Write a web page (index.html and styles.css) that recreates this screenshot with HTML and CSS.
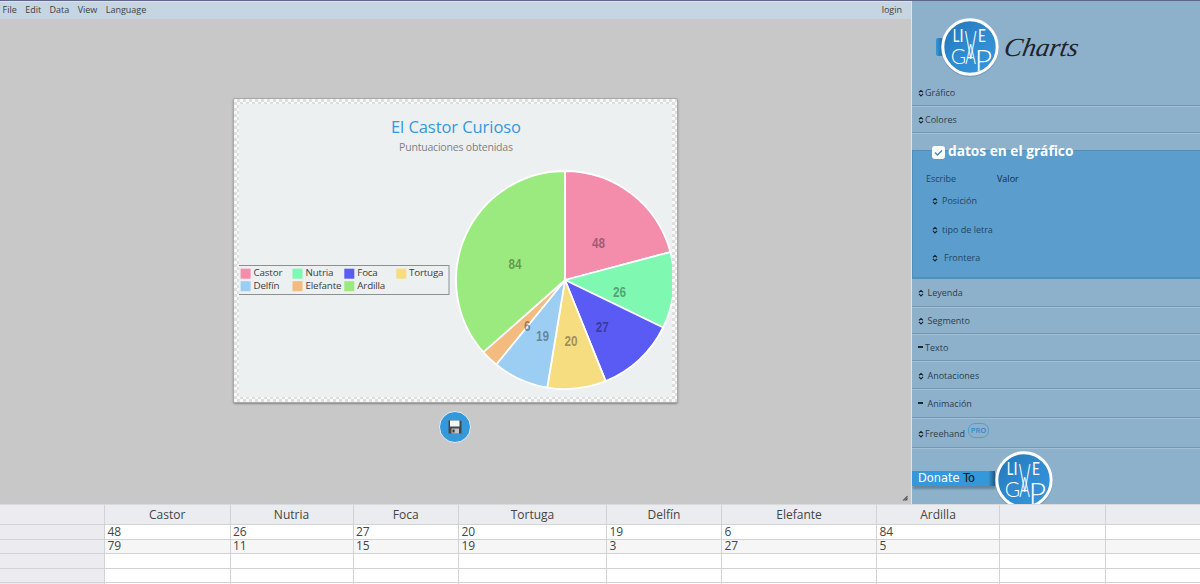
FILE: index.html
```html
<!DOCTYPE html>
<html lang="es">

<head>
    <meta charset="UTF-8">
    <meta name="viewport" content="width=device-width, initial-scale=1.0">
    <title>LiveGap Charts</title>
    <link rel="stylesheet" href="styles.css">
</head>

<body>
    <!-- shared symbols -->
    <svg class="defs" width="0" height="0">
        <symbol id="sort" viewBox="0 0 6 8">
            <path d="M0.900 3.400 L3 1.400 L5.100 3.400 M0.900 4.900 L3 6.900 L5.100 4.900" fill="none" stroke="#18222b" stroke-width="1.1" />
        </symbol>
        <symbol id="badge" viewBox="0 0 60 60">
            <circle cx="30" cy="31" r="29" fill="#5f7f98" opacity=".45" />
            <circle cx="30" cy="30" r="27.2" fill="url(#blue)" stroke="#fff" stroke-width="3" />
            <g fill="#fff" font-family="Lato" text-anchor="middle">
                <text transform="translate(16 25) scale(.75 1)" font-size="17">L</text>
                <text transform="translate(21.5 25) scale(.85 1)" font-size="17">I</text>
                <text transform="translate(30.5 42) scale(.46 1)" font-size="39" font-weight="300">V</text>
                <text transform="translate(42 25) scale(.8 1)" font-size="17">E</text>
                <text transform="translate(18.5 46.5)" font-size="21" font-weight="300">G</text>
                <text transform="translate(30.500 47) scale(.6 1)" font-size="27" font-weight="300">A</text>
                <text transform="translate(43.5 54)" font-size="30" font-weight="300">P</text>
            </g>
        </symbol>
        <linearGradient id="blue" x1="0" y1="0" x2="1" y2="1">
            <stop offset="0" stop-color="#2373b4" />
            <stop offset=".5" stop-color="#2f8bd0" />
            <stop offset="1" stop-color="#3a96dc" />
        </linearGradient>
    </svg>

    <div class="top">
        <div class="workspace">
            <nav class="menu">
                <span>File</span>
                <span>Edit</span>
                <span>Data</span>
                <span>View</span>
                <span>Language</span>
                <span class="login">login</span>
            </nav>
            <div class="chart-area">
                <div class="chart-frame">
                    <svg class="chart" width="433" height="293" viewBox="0 0 433 293">
                        <text x="217" y="29" class="title" textLength="130">El Castor Curioso</text>
                        <text x="217" y="47" class="subtitle" textLength="114">Puntuaciones obtenidas</text>

                        <g stroke="#fff" stroke-width="1.800" stroke-linejoin="round">
                            <path fill="#f48cab" d="M326 176 V67 A109 109 0 0 1 431.35 148.03 Z" />
                            <path fill="#7ff8b2" d="M326 176 L431.35 148.03 A109 109 0 0 1 424.11 223.49 Z" />
                            <path fill="#5a5af4" d="M326 176 L424.11 223.49 A109 109 0 0 1 366.67 277.13 Z" />
                            <path fill="#f5dd80" d="M326 176 L366.67 277.13 A109 109 0 0 1 308.22 283.54 Z" />
                            <path fill="#9bcef2" d="M326 176 L308.22 283.54 A109 109 0 0 1 257.21 260.55 Z" />
                            <path fill="#f3bb7f" d="M326 176 L257.21 260.55 A109 109 0 0 1 244.34 248.19 Z" />
                            <path fill="#9aea7f" d="M326 176 L244.34 248.19 A109 109 0 0 1 326 67 Z" />
                        </g>
                        <g class="values">
                            <text transform="translate(359.5 144) scale(.84 1)">48</text>
                            <text transform="translate(380.5 192.7) scale(.84 1)">26</text>
                            <text transform="translate(363.3 227.5) scale(.84 1)">27</text>
                            <text transform="translate(332 242) scale(.84 1)">20</text>
                            <text transform="translate(303.5 237) scale(.84 1)">19</text>
                            <text transform="translate(288.3 227) scale(.84 1)">6</text>
                            <text transform="translate(276 165) scale(.84 1)">84</text>
                        </g>

                        <rect x="-2" y="161.5" width="212" height="29" fill="none" stroke="#8c9093" />
                        <g class="legend">
                            <rect x="1.600" y="164.700" width="10" height="10" fill="#f48cab" />
                            <text x="14.5" y="172.300" textLength="29">Castor</text>
                            <rect x="53.500" y="164.700" width="10" height="10" fill="#7ff8b2" />
                            <text x="66.5" y="172.300" textLength="28">Nutria</text>
                            <rect x="105.300" y="164.700" width="10" height="10" fill="#5a5af4" />
                            <text x="118.3" y="172.300" textLength="20.5">Foca</text>
                            <rect x="157.300" y="164.700" width="10" height="10" fill="#f5dd80" />
                            <text x="170" y="172.300" textLength="34.5">Tortuga</text>
                            <rect x="1.600" y="177.200" width="10" height="10" fill="#9bcef2" />
                            <text x="14.5" y="185" textLength="26">Delfín</text>
                            <rect x="53.500" y="177.200" width="10" height="10" fill="#f3bb7f" />
                            <text x="66.5" y="185" textLength="36">Elefante</text>
                            <rect x="105.300" y="177.200" width="10" height="10" fill="#9aea7f" />
                            <text x="118.3" y="185" textLength="28">Ardilla</text>
                        </g>
                    </svg>
                </div>
                <div class="save">
                    <svg width="16" height="16" viewBox="0 0 16 16">
                        <path d="M1.500 1.500 H13.500 L14.500 2.500 V14.500 H1.500 Z" fill="#454648" />
                        <rect x="3" y="1.500" width="9.500" height="6" fill="#f2f6f8" />
                        <rect x="4.500" y="9.500" width="7.500" height="5" fill="#c3c5c7" />
                        <rect x="5.500" y="10.500" width="2" height="3" fill="#333" />
                    </svg>
                </div>
                <svg class="resize" width="6" height="6" viewBox="0 0 6 6">
                    <path d="M0.500 5.500 L5.500 0.500 V5.500 Z" fill="#777" />
                    <path d="M1 5.500 L5.500 1 M3.500 5.500 L5.500 3.500" stroke="#444" stroke-width=".8" />
                </svg>
            </div>
        </div>

        <aside class="sidebar">
            <div class="brand">
                <i class="ribbon"></i>
                <svg class="badge" width="60" height="60"><use href="#badge" /></svg>
                <svg class="charts" width="82" height="40" viewBox="0 0 82 40">
                    <text transform="translate(2 29) skewX(-10)" textLength="74" lengthAdjust="spacingAndGlyphs">Charts</text>
                </svg>
            </div>
            <div class="row grafico"><svg class="sort"><use href="#sort" /></svg>Gráfico</div>
            <div class="row colores"><svg class="sort"><use href="#sort" /></svg>Colores</div>

            <section class="panel">
                <h3><span class="check"><svg width="13" height="13" viewBox="0 0 13 13"><path d="M3 6.500 L5.500 9 L10 4.500" fill="none" stroke="#5086ad" stroke-width="1.500" /></svg></span>datos en el gráfico</h3>
                <div class="pair"><span>Escribe</span><b>Valor</b></div>
                <div class="sub"><svg class="sort"><use href="#sort" /></svg>Posición</div>
                <div class="sub"><svg class="sort"><use href="#sort" /></svg>tipo de letra</div>
                <div class="sub frontera"><svg class="sort"><use href="#sort" /></svg>Frontera</div>
            </section>

            <div class="row wide leyenda"><svg class="sort"><use href="#sort" /></svg>Leyenda</div>
            <div class="row wide segmento"><svg class="sort"><use href="#sort" /></svg>Segmento</div>
            <div class="row texto"><i class="dash"></i>Texto</div>
            <div class="row wide anotaciones"><svg class="sort"><use href="#sort" /></svg>Anotaciones</div>
            <div class="row wide animacion"><i class="dash"></i>Animación</div>
            <div class="row freehand"><svg class="sort"><use href="#sort" /></svg>Freehand<span class="pro">PRO</span></div>

            <div class="donate">
                <div class="donate-label">Donate <b>To</b></div>
                <svg class="badge" width="60" height="60"><use href="#badge" /></svg>
            </div>
        </aside>
    </div>

    <div class="sheet">
        <div class="line head"><span></span><span>Castor</span><span>Nutria</span><span>Foca</span><span>Tortuga</span><span>Delfín</span><span>Elefante</span><span>Ardilla</span><span></span><span></span></div>
        <div class="line"><span></span><span>48</span><span>26</span><span>27</span><span>20</span><span>19</span><span>6</span><span>84</span><span></span><span></span></div>
        <div class="line even"><span></span><span>79</span><span>11</span><span>15</span><span>19</span><span>3</span><span>27</span><span>5</span><span></span><span></span></div>
        <div class="line"><span></span><span></span><span></span><span></span><span></span><span></span><span></span><span></span><span></span><span></span></div>
        <div class="line"><span></span><span></span><span></span><span></span><span></span><span></span><span></span><span></span><span></span><span></span></div>
        <div class="line"><span></span><span></span><span></span><span></span><span></span><span></span><span></span><span></span><span></span><span></span></div>
    </div>
</body>

</html>
```

FILE: styles.css
```css
* {
    box-sizing: border-box;
}

body {
    margin: 0;
    height: 584px;
    overflow: hidden;
    font-family: "Open Sans", "Noto Sans", sans-serif;
    font-size: 9px;
    color: #2c3e4c;
    border-top: 1px solid #62668c;
    background-color: #fff;
}

.defs {
    position: absolute;
}

.top {
    display: flex;
    height: 503px;
}

.workspace {
    width: 911px;
    display: flex;
    flex-direction: column;
    background-color: #c8c8c8;
}

.menu {
    display: flex;
    align-items: center;
    gap: 8.4px;
    height: 18px;
    padding: 0 9px 2px 2.5px;
    background-color: #c5d5e1;
    border-top: 1px solid #d9e3ee;
    color: #3c4146;
}

.login {
    margin-left: auto;
}

.chart-area {
    flex: 1;
    position: relative;
    display: flex;
    flex-direction: column;
    align-items: center;
    padding-top: 79px;
}

.chart-frame {
    width: 445px;
    height: 305px;
    padding: 5px;
    border: 1px solid #aaa;
    border-radius: 2px;
    box-shadow: 0 1px 2px rgba(0, 0, 0, 0.35);
    background: repeating-conic-gradient(#dedede 0 25%, #f8f8f8 0 50%) 0 0 / 6px 6px;
}

.chart {
    display: block;
    overflow: hidden;
    background-color: #ecf0f1;
}

.title {
    font-size: 16.5px;
    fill: #3498db;
    text-anchor: middle;
}

.subtitle {
    font-size: 10.5px;
    fill: #7f8183;
    text-anchor: middle;
}

.values {
    font-family: "Liberation Sans", sans-serif;
    font-size: 14px;
    font-weight: bold;
    fill: #000;
    fill-opacity: 0.37;
    text-anchor: middle;
}

.legend {
    font-size: 9.8px;
    fill: #3c3c3c;
}

.save {
    display: flex;
    justify-content: center;
    align-items: center;
    width: 32px;
    height: 32px;
    margin: 8px 1px 0 0;
    border: 1px solid #e8eef2;
    border-radius: 50%;
    background-color: #3498db;
}

.resize {
    position: absolute;
    right: 3px;
    bottom: 3px;
}

.sidebar {
    flex: 1;
    display: flex;
    flex-direction: column;
    overflow: hidden;
    border-left: 1px solid #dde6ec;
    background-color: #8eb1cb;
}

.sidebar > * {
    flex: none;
}

.brand {
    display: flex;
    align-items: center;
    height: 79px;
    padding: 12px 0 0 24px;
}

.ribbon {
    width: 7px;
    height: 18px;
    margin-right: -3.5px;
    border-radius: 2px;
    background: linear-gradient(90deg, #3498db, #256b9d);
}

.badge {
    flex: none;
}

.charts {
    margin-left: 1px;
}

.charts text {
    font-family: "Liberation Serif", serif;
    font-style: italic;
    font-size: 26px;
    fill: #202427;
}

.row {
    display: flex;
    align-items: center;
    padding-left: 6px;
    border-bottom: 1px solid #7398b4;
    box-shadow: 0 1px #a4c0d4;
}

.sort {
    width: 6px;
    height: 8px;
    margin: 1px 1px 0 0;
}

.wide .sort {
    margin-right: 3.5px;
}

.dash {
    width: 5px;
    height: 2px;
    margin: -2px 2px 0 0;
    background-color: #1b2730;
}

.wide .dash {
    margin-right: 4.500px;
}

.grafico {
    height: 26px;
}

.colores {
    height: 27px;
}

.panel {
    height: 129px;
    margin-top: 17px;
    border: 1px solid #4f8fbd;
    border-right: none;
    border-bottom-width: 2px;
    background-color: #5b9dcd;
    color: #23465f;
}

.panel h3 {
    display: flex;
    align-items: center;
    height: 20px;
    margin: -10px 0 0 19px;
    font-size: 13.7px;
    line-height: 20px;
    color: #fff;
}

.check {
    width: 13px;
    height: 13px;
    margin: 3px 3px 0 0;
    border-radius: 3px;
    background-color: #fff;
}

.check svg {
    display: block;
}

.pair {
    display: flex;
    height: 14px;
    margin-top: 11px;
    padding-left: 13px;
    line-height: 14px;
}

.pair span {
    width: 71px;
}

.pair b {
    font-weight: normal;
    color: #122c40;
}

.sub {
    display: flex;
    align-items: center;
    height: 28.7px;
    padding-left: 19px;
}

.sub .sort {
    margin-right: 4px;
}

.frontera .sort {
    margin-right: 6px;
}

.leyenda,
.anotaciones {
    height: 28px;
}

.segmento,
.texto {
    height: 27px;
}

.texto,
.anotaciones,
.animacion {
    padding-top: 1px;
}

.animacion {
    height: 29px;
}

.freehand {
    height: 30px;
    padding-top: 2px;
}

.pro {
    width: 21px;
    height: 15px;
    margin: -6px 0 0 3px;
    border: 1px solid #569bd0;
    border-radius: 7px;
    font-size: 7.5px;
    font-weight: 600;
    line-height: 13px;
    text-align: center;
    color: #3488c8;
}

.donate {
    display: flex;
    align-items: flex-start;
    padding-top: 2px;
}

.donate-label {
    width: 83px;
    height: 15px;
    margin: 21px -1px 0 0;
    padding-left: 6px;
    background: linear-gradient(90deg, #3498db 92%, #23577e);
    box-shadow: 1px 3px 2px rgba(40, 70, 95, 0.4);
    font-family: "DejaVu Sans", sans-serif;
    font-size: 11.4px;
    line-height: 15px;
    white-space: nowrap;
    color: #fff;
}

.donate-label b {
    font-weight: normal;
    color: #111;
}

.sheet {
    border-top: 1px solid #d9dadd;
    font-size: 12px;
    color: #444;
}

.line {
    display: grid;
    grid-template-columns: 105px 125.5px 123px 105.5px 148px 115px 155px 123px 106px 96px;
    height: 14.5px;
    line-height: 13px;
}

.line span {
    padding-left: 2.5px;
    border-right: 1px solid #d2d3d5;
    border-bottom: 1px solid #d2d3d5;
}

.line span:first-child {
    background-color: #ebebf0;
}

.head {
    height: 20px;
    line-height: 19px;
    text-align: center;
}

.head span {
    padding: 0;
    background-color: #ebecf0;
}

.even {
    line-height: 12px;
    background-color: #f6f6f6;
}
```
